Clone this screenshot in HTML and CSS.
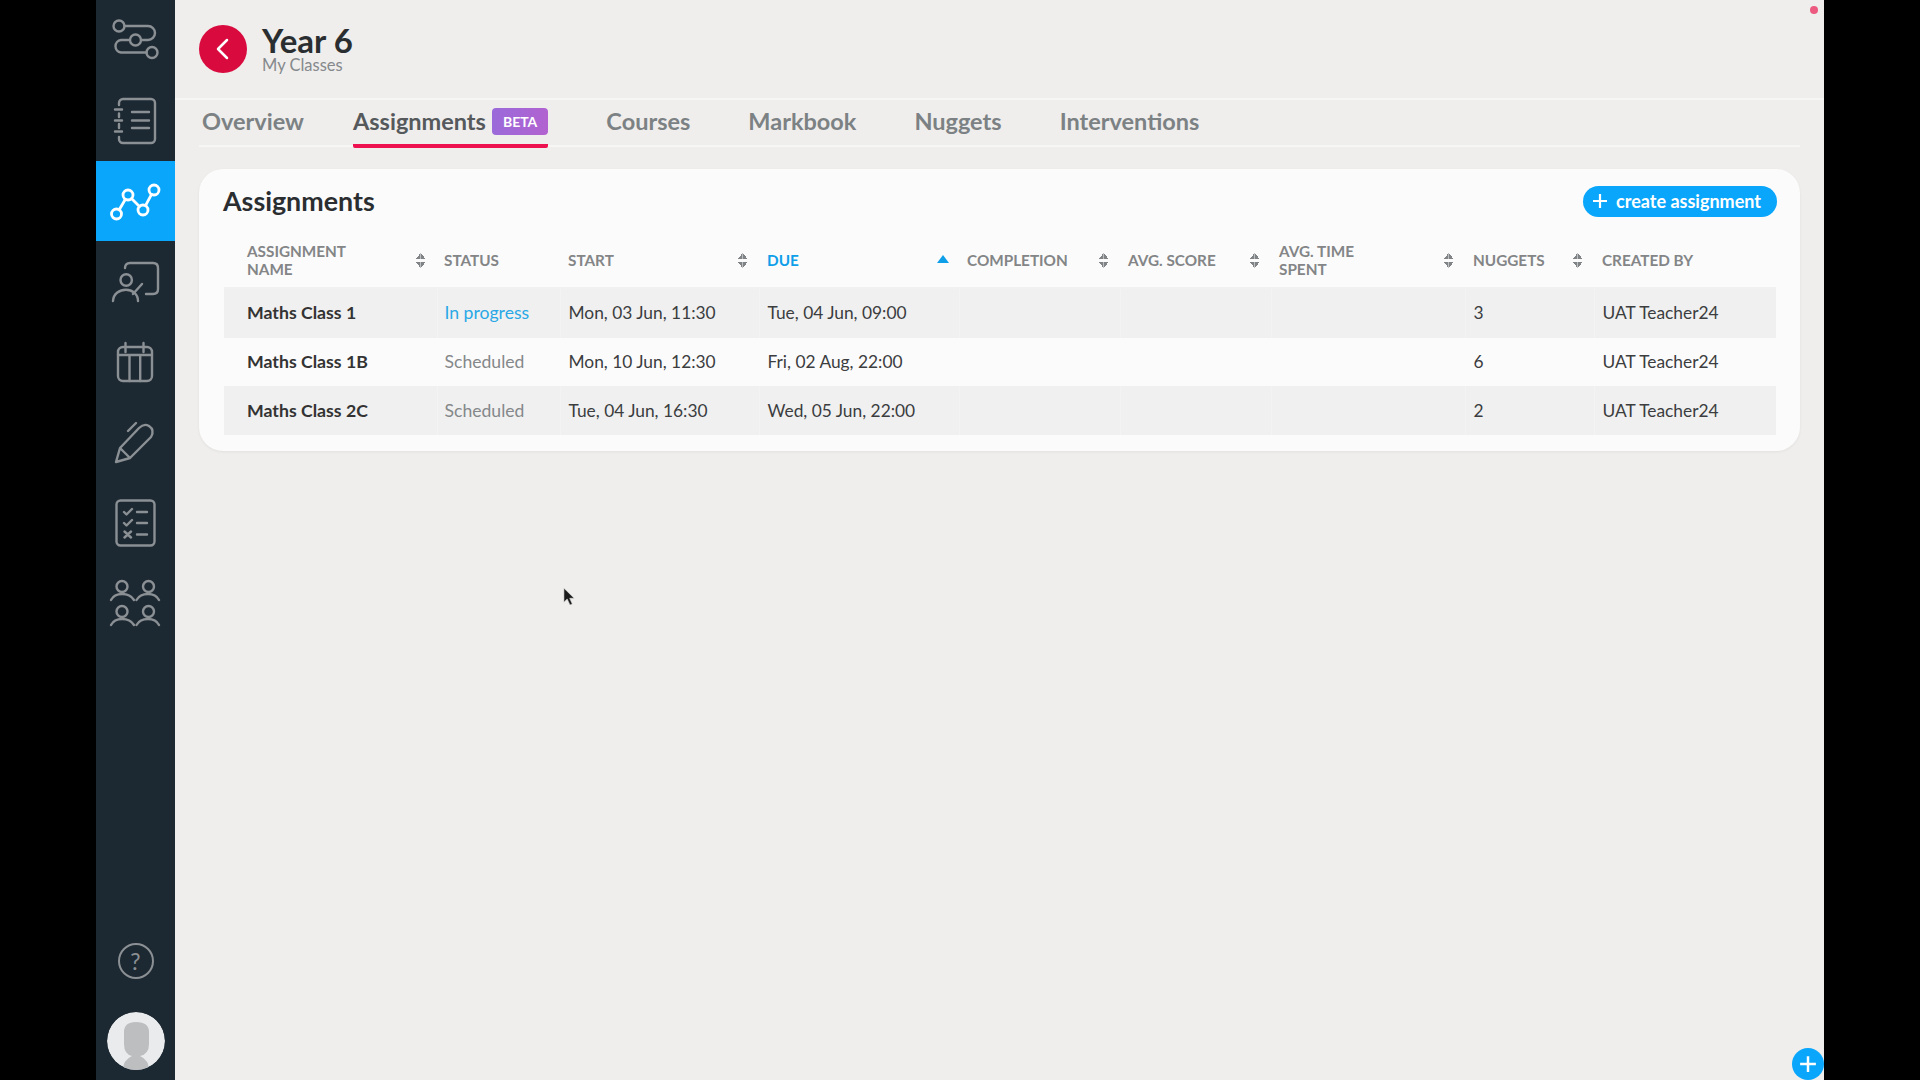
FILE: index.html
```html
<!DOCTYPE html>
<html lang="en">
<head>
  <meta charset="UTF-8">
  <title>Year 6 - Assignments</title>
  <link rel="stylesheet" href="styles.css">
</head>
<body>
  <div class="app">
    <!-- Left navigation -->
    <nav class="sidebar">
      <a class="nav-item">
        <svg class="nav-icon" viewBox="0 0 48 48"><circle cx="8" cy="10" r="5.5"/><circle cx="24.5" cy="24" r="5.5"/><circle cx="41" cy="36.5" r="5.5"/><path d="M13.5 10H37a7 7 0 0 1 0 14H30M19 24H10a6.3 6.3 0 0 0 0 12.5H35.500"/></svg>
      </a>
      <a class="nav-item">
        <svg class="nav-icon" viewBox="0 0 48 48"><path d="M8 8V6a4 4 0 0 1 4-4H40a4 4 0 0 1 4 4V42a4 4 0 0 1-4 4H12a4 4 0 0 1-4-4V40M8 16.500V20M8 27V31"/><path d="M4 12.500H11M4 23.500H11M4 34.500H11M21 15H38M21 23.500H38M21 31H38"/></svg>
      </a>
      <a class="nav-item active">
        <svg class="nav-icon" viewBox="0 0 48 48"><circle cx="5.500" cy="37" r="5"/><circle cx="17" cy="18" r="5"/><circle cx="32" cy="33" r="5"/><circle cx="43" cy="13" r="5"/><path d="M8.200 32.800L14.400 22.200M20.500 21.500L28.500 29.500M34.500 28.600L40.500 17.400"/></svg>
      </a>
      <a class="nav-item">
        <svg class="nav-icon" viewBox="0 0 48 48"><circle cx="15.200" cy="22" r="5.700"/><path d="M14 10Q14 5 19 5H42Q47 5 47 10V31Q47 36 42 36H35M2 43C3 28 27 28 27 43M22 36L31 26"/></svg>
      </a>
      <a class="nav-item">
        <svg class="nav-icon" viewBox="0 0 48 48"><rect x="7" y="9" width="34" height="34" rx="5"/><path d="M14.500 5V14M32.500 5V14M7 17H41M18.500 17V43M29.200 17V43"/></svg>
      </a>
      <a class="nav-item">
        <svg class="nav-icon" viewBox="0 0 48 48"><path d="M5 44L9 30L28 10Q33 5 38 8Q44 12 40 19L19 40ZM9 30L19 40M17 13L25 5"/></svg>
      </a>
      <a class="nav-item">
        <svg class="nav-icon" viewBox="0 0 48 48"><rect x="5.500" y="1.500" width="38" height="45" rx="4"/><path d="M13 13L15.500 15.500L21 10M13 24L15.500 26.500L21 21M13.500 32.500L20 38.500M20 32.500L13.500 38.500M26 13H36M26 24H36M26 35.500H36"/></svg>
      </a>
      <a class="nav-item">
        <svg class="nav-icon" viewBox="0 0 48 48"><circle cx="11" cy="7.500" r="5.500"/><circle cx="37.500" cy="7.500" r="5.500"/><circle cx="11" cy="32.500" r="5.500"/><circle cx="37.500" cy="32.500" r="5.500"/><path d="M0 21C4 13 18 13 23 21M25.500 21C30 13 44 13 48 21M0 46C4 38 18 38 23 46M25.500 46C30 38 44 38 48 46"/></svg>
      </a>
      <div class="sidebar-bottom">
        <div class="help">?</div>
        <svg class="avatar" viewBox="0 0 58 58">
          <defs><clipPath id="avatar-clip"><circle cx="29" cy="29" r="29"/></clipPath></defs>
          <g clip-path="url(#avatar-clip)">
            <circle cx="29" cy="29" r="29" fill="#e9ebed"/>
            <path class="avatar-person" d="M17 20Q17 10 29 10Q42 10 42 20V32Q42 42 33 44Q42 48 42 58H16Q16 48 25 44Q17 42 17 32Z"/>
          </g>
        </svg>
      </div>
    </nav>

    <main class="main">
      <header class="page-header">
        <a class="back-btn">
          <svg viewBox="0 0 48 48"><path d="M28 15L19 24L28 33"/></svg>
        </a>
        <div>
          <h1>Year 6</h1>
          <p class="crumb">My Classes</p>
        </div>
      </header>

      <div class="tabs">
        <a class="tab first">Overview</a>
        <a class="tab active">Assignments <span class="beta">BETA</span></a>
        <a class="tab">Courses</a>
        <a class="tab">Markbook</a>
        <a class="tab">Nuggets</a>
        <a class="tab">Interventions</a>
      </div>

      <section class="card">
        <div class="card-head">
          <h2>Assignments</h2>
          <a class="create-btn">
            <svg viewBox="0 0 16 16"><path d="M8 1V15M1 8H15"/></svg>
            create assignment
          </a>
        </div>
        <table class="assign-table">
          <colgroup>
            <col class="c-name"><col class="c-status"><col class="c-start"><col class="c-due"><col class="c-completion"><col class="c-score"><col class="c-time"><col class="c-nuggets"><col class="c-created">
          </colgroup>
          <thead>
            <tr>
              <th><div class="th-in">Assignment<br>name<i class="sort"></i></div></th>
              <th><div class="th-in">Status</div></th>
              <th><div class="th-in">Start<i class="sort"></i></div></th>
              <th class="sorted"><div class="th-in">Due<i class="sort-up"></i></div></th>
              <th><div class="th-in">Completion<i class="sort"></i></div></th>
              <th><div class="th-in">Avg. score<i class="sort"></i></div></th>
              <th><div class="th-in">Avg. time<br>spent<i class="sort"></i></div></th>
              <th><div class="th-in">Nuggets<i class="sort"></i></div></th>
              <th><div class="th-in">Created by</div></th>
            </tr>
          </thead>
          <tbody>
            <tr>
              <td class="name">Maths Class 1</td>
              <td class="progress">In progress</td>
              <td>Mon, 03 Jun, 11:30</td>
              <td>Tue, 04 Jun, 09:00</td>
              <td></td><td></td><td></td>
              <td>3</td>
              <td>UAT Teacher24</td>
            </tr>
            <tr>
              <td class="name">Maths Class 1B</td>
              <td class="muted">Scheduled</td>
              <td>Mon, 10 Jun, 12:30</td>
              <td>Fri, 02 Aug, 22:00</td>
              <td></td><td></td><td></td>
              <td>6</td>
              <td>UAT Teacher24</td>
            </tr>
            <tr>
              <td class="name">Maths Class 2C</td>
              <td class="muted">Scheduled</td>
              <td>Tue, 04 Jun, 16:30</td>
              <td>Wed, 05 Jun, 22:00</td>
              <td></td><td></td><td></td>
              <td>2</td>
              <td>UAT Teacher24</td>
            </tr>
          </tbody>
        </table>
      </section>

      <!-- Recording leftovers and floating button -->
      <span class="rec-dot"></span>
      <a class="fab"><svg viewBox="0 0 16 16"><path d="M8 1V15M1 8H15"/></svg></a>
      <svg class="cursor" viewBox="0 0 14 22"><path d="M1 1V16L4.500 12.500L7.500 19L10 18L7.200 11.800H12Z"/></svg>
    </main>
  </div>
</body>
</html>
```
FILE: styles.css
```css
/* General page */
html, body {
  margin: 0;
  height: 100%;
  background: #000;
  overflow: hidden;
}

body {
  font-family: "Lato", "Noto Sans", sans-serif;
  color: #333;
}

.app {
  display: flex;
  height: 1080px;
  margin: 0 96px;
}

/* Sidebar */
.sidebar {
  width: 79px;
  flex: none;
  background: #1d2932;
  display: flex;
  flex-direction: column;
}

.nav-item {
  height: 80.450px;
  padding-right: 1px;
  flex: none;
  display: flex;
  align-items: center;
  justify-content: center;
}

.nav-item.active {
  background: #0aa6fb;
}

.nav-icon {
  width: 48px;
  height: 48px;
  fill: none;
  stroke: #8b9094;
  stroke-width: 2.400;
  stroke-linecap: round;
  stroke-linejoin: round;
  overflow: visible;
}

.nav-item.active .nav-icon {
  stroke: #fff;
  stroke-width: 2.800;
}

.sidebar-bottom {
  margin-top: auto;
  padding-bottom: 10px;
  display: flex;
  flex-direction: column;
  align-items: center;
  gap: 33px;
}

.help {
  width: 32px;
  height: 32px;
  border: 2px solid #8b9094;
  border-radius: 50%;
  color: #8b9094;
  font-size: 23px;
  line-height: 32px;
  text-align: center;
}

.avatar {
  width: 58px;
  height: 58px;
}

.avatar-person {
  fill: #bcbec0;
}

/* Main area */
.main {
  flex: 1;
  position: relative;
  background: #efeeec;
  min-width: 0;
}

.page-header {
  height: 98px;
  padding-left: 24px;
  display: flex;
  align-items: center;
  gap: 15px;
  border-bottom: 2px solid #f6f6f5;
}

.back-btn {
  width: 48px;
  height: 48px;
  border-radius: 50%;
  background: #d80a3e;
}

.back-btn svg {
  display: block;
  fill: none;
  stroke: #fff;
  stroke-width: 2.500;
  stroke-linecap: round;
  stroke-linejoin: round;
}

h1 {
  margin: -2px 0 0;
  font-size: 33px;
  line-height: 34px;
  font-weight: 700;
  color: #2b2e31;
}

.crumb {
  margin: 0;
  font-size: 16.500px;
  line-height: 16px;
  color: #85898c;
}

/* Tabs */
.tabs {
  height: 45px;
  margin: 0 24px;
  padding-left: 3px;
  display: flex;
  gap: 58px;
  border-bottom: 2px solid #f6f6f5;
}

.tab {
  display: flex;
  align-items: center;
  gap: 6px;
  height: 42px;
  padding-bottom: 2px;
  border-bottom: 4px solid transparent;
  font-size: 23.500px;
  font-weight: 700;
  color: #7c8184;
}

.tab.first {
  margin-right: -9px;
}

.tab.active {
  color: #55595c;
  border-bottom-color: #ee1150;
  border-radius: 0 0 2px 2px;
}

.beta {
  font-size: 14px;
  line-height: 27px;
  padding: 0 11px;
  color: #fff;
  border-radius: 4px;
  background: linear-gradient(100deg, #9a6ada, #b262d0);
}

/* Card */
.card {
  margin: 22px 24px 0;
  padding: 16px 23px 16px 25px;
  background: #fbfbfb;
  border-radius: 24px;
  box-shadow: 0 1px 3px rgba(0, 0, 0, 0.06);
}

.card-head {
  height: 32px;
  display: flex;
  align-items: center;
  justify-content: space-between;
}

h2 {
  margin: 0 0 0 -1px;
  font-size: 26.800px;
  font-weight: 700;
  color: #2b2e31;
}

.create-btn {
  height: 31px;
  padding: 0 16px 0 9px;
  display: flex;
  align-items: center;
  gap: 8px;
  background: #0aa6fb;
  border-radius: 16px;
  color: #fff;
  font-size: 18px;
  font-weight: 700;
}

.create-btn svg {
  width: 16px;
  height: 16px;
  fill: none;
  stroke: #fff;
  stroke-width: 2.200;
}

/* Table */
.assign-table {
  width: 1552px;
  table-layout: fixed;
  border-collapse: collapse;
  font-size: 17.350px;
}

.c-name { width: 213px; }
.c-status { width: 123px; }
.c-start { width: 199px; }
.c-due { width: 200px; }
.c-completion { width: 161px; }
.c-score { width: 151px; }
.c-time { width: 194px; }
.c-nuggets { width: 129px; }
.c-created { width: 182px; }

th {
  height: 54px;
  padding: 16px 8px 0;
  font-size: 15.300px;
  line-height: 18.500px;
  font-weight: 700;
  text-align: left;
  text-transform: uppercase;
  color: #838587;
  border-bottom: 2px solid #f1f1f1;
}

th:first-child,
td:first-child {
  padding-left: 23px;
}

th:nth-child(2),
td:nth-child(2) {
  padding-left: 7px;
}

.th-in {
  position: relative;
}

th.sorted {
  color: #0f9fe9;
}

/* Sort arrows */
.sort,
.sort-up {
  position: absolute;
  right: 4px;
  top: 50%;
  width: 9px;
}

.sort {
  height: 15px;
  margin-top: -7px;
  background:
    linear-gradient(to bottom right, transparent 50%, #808487 50%) 0 0 / 50% 6px no-repeat,
    linear-gradient(to bottom left, transparent 50%, #808487 50%) 100% 0 / 50% 6px no-repeat,
    linear-gradient(to top right, transparent 50%, #808487 50%) 0 100% / 50% 6px no-repeat,
    linear-gradient(to top left, transparent 50%, #808487 50%) 100% 100% / 50% 6px no-repeat;
}

.sort-up {
  width: 0;
  height: 0;
  right: 2px;
  margin-top: -5px;
  border-left: 6px solid transparent;
  border-right: 6px solid transparent;
  border-bottom: 8px solid #0f9fe9;
}

td {
  height: 47.700px;
  padding: 0 8px 1px;
  color: #3b3d3f;
  white-space: nowrap;
  border-left: 1px solid rgba(255, 255, 255, 0.2);
}

td:first-child {
  border-left: 0;
}

tbody tr:nth-child(odd) td {
  background: #f0f0f0;
}

td.name {
  font-size: 17.700px;
  font-weight: 700;
  color: #333;
}

td.progress {
  font-size: 17.600px;
  color: #2aa8e6;
}

td.muted {
  font-size: 17.600px;
  color: #85888a;
}

/* Floating bits */
.rec-dot {
  position: absolute;
  top: 6px;
  right: 6px;
  width: 8px;
  height: 8px;
  border-radius: 50%;
  background: #ec5a80;
}

.fab {
  position: absolute;
  right: 0;
  bottom: 0;
  width: 32px;
  height: 32px;
  border-radius: 50%;
  background: #0aa6fb;
}

.fab svg {
  display: block;
  margin: 7px;
  width: 18px;
  height: 18px;
  fill: none;
  stroke: #fff;
  stroke-width: 2.200;
}

.cursor {
  position: absolute;
  left: 388px;
  top: 587px;
  width: 13px;
  height: 21px;
  fill: #1b1b1b;
  stroke: #e0e0e0;
  stroke-width: 0.600;
}
```
